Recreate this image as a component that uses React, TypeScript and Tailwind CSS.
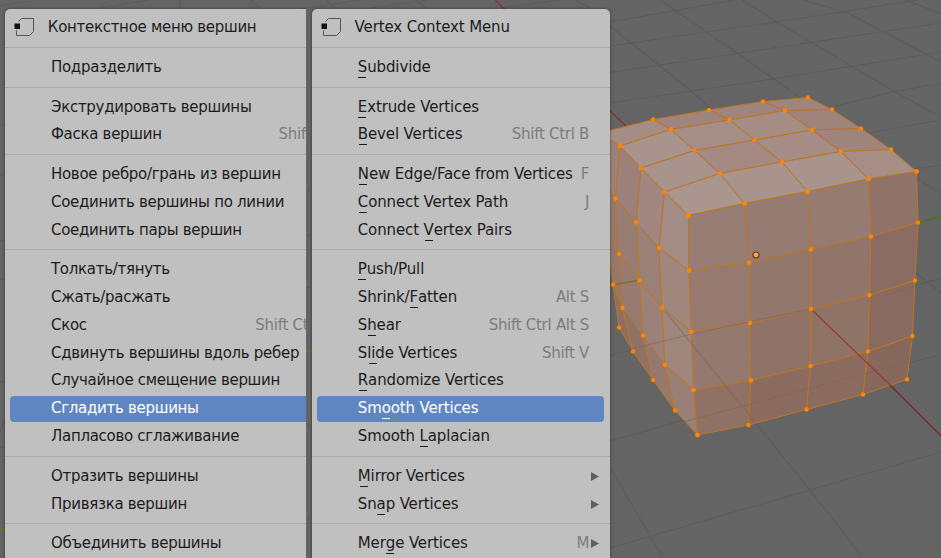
type Item = {
  label: string;
  keys?: string;
  active?: boolean;
  arrow?: boolean;
};

const russian: Item[][] = [
  [{ label: "Подразделить" }],
  [{ label: "Экструдировать вершины" }, { label: "Фаска вершин", keys: "Shift Ctrl B" }],
  [
    { label: "Новое ребро/грань из вершин" },
    { label: "Соединить вершины по линии" },
    { label: "Соединить пары вершин" },
  ],
  [
    { label: "Толкать/тянуть" },
    { label: "Сжать/расжать" },
    { label: "Скос", keys: "Shift Ctrl Alt S" },
    { label: "Сдвинуть вершины вдоль ребер" },
    { label: "Случайное смещение вершин" },
    { label: "Сгладить вершины", active: true },
    { label: "Лапласово сглаживание" },
  ],
  [{ label: "Отразить вершины" }, { label: "Привязка вершин" }],
  [{ label: "Объединить вершины" }],
];

// "&" precedes the accelerator letter of a label
const english: Item[][] = [
  [{ label: "&Subdivide" }],
  [{ label: "&Extrude Vertices" }, { label: "&Bevel Vertices", keys: "Shift Ctrl B" }],
  [
    { label: "&New Edge/Face from Vertices", keys: "F" },
    { label: "&Connect Vertex Path", keys: "J" },
    { label: "Connect &Vertex Pairs" },
  ],
  [
    { label: "&Push/Pull" },
    { label: "Shrink/&Fatten", keys: "Alt S" },
    { label: "S&hear", keys: "Shift Ctrl Alt S" },
    { label: "Sl&ide Vertices", keys: "Shift V" },
    { label: "&Randomize Vertices" },
    { label: "Sm&ooth Vertices", active: true },
    { label: "Smooth &Laplacian" },
  ],
  [
    { label: "&Mirror Vertices", arrow: true },
    { label: "Sn&ap Vertices", arrow: true },
  ],
  [{ label: "Mer&ge Vertices", keys: "M", arrow: true }],
];

function VertexIcon() {
  return (
    <svg className="h-5 w-6 shrink-0" viewBox="0 0 24 20" fill="none">
      <path d="M6.5 3.5L9.5 0.5H21.5V13.5L17.5 17.5H4.5V12.5" stroke="#555" strokeWidth="1" />
      <rect x="2.5" y="5.5" width="5.5" height="5.5" fill="#111" />
    </svg>
  );
}

function Label({ text }: { text: string }) {
  const at = text.indexOf("&");
  if (at < 0) return <span className="pb-px">{text}</span>;
  return (
    <span className="pb-px">
      {text.slice(0, at)}
      <span className="-mx-1 bg-[linear-gradient(currentColor,currentColor)] bg-[length:8px_1px] bg-[position:50%_100%] bg-no-repeat px-1 pb-0.5">
        {text[at + 1]}
      </span>
      {text.slice(at + 2)}
    </span>
  );
}

function Row({ item }: { item: Item }) {
  return (
    <div
      className={
        "flex h-[26.45px] items-center whitespace-nowrap rounded pl-[40.7px] " +
        (item.arrow ? "pr-[5px] " : "pr-[15px] ") +
        (item.active ? "bg-[#5f86c1] text-white" : "text-[#1c1c1c]")
      }
    >
      <Label text={item.label} />
      <span className="ml-auto pb-px tracking-[-0.28px] text-[#7c7c7c]">{item.keys}</span>
      {item.arrow && (
        <svg className="ml-0.5 h-[9px] w-2" viewBox="0 0 8 9">
          <path d="M0 0L8 4.5L0 9Z" fill="#5e5e5e" />
        </svg>
      )}
    </div>
  );
}

function Menu({ title, groups, className }: { title: string; groups: Item[][]; className: string }) {
  return (
    <div className={"h-[600px] shrink-0 rounded-t-[5px] bg-[#c0c0c0] shadow-[0_0_3px_rgba(0,0,0,0.5)] " + className}>
      <div className="flex h-[38.8px] items-center gap-3 whitespace-nowrap pl-[7px] text-[#1c1c1c]">
        <VertexIcon />
        <span className="pb-px">{title}</span>
      </div>
      {groups.map((group, i) => (
        <div
          key={i}
          className="flex flex-col gap-[1.45px] border-t border-[#aaa] px-[5.5px] pb-[5.85px] pt-[6.15px]"
        >
          {group.map((item) => (
            <Row key={item.label} item={item} />
          ))}
        </div>
      ))}
    </div>
  );
}

type P = [number, number];

const top: P[][] = [
  [[600, 133], [653, 119.5], [709, 110], [763, 101.5], [808, 97.5]],
  [[620, 146], [671, 129.5], [729.5, 120], [785, 110.5], [832, 109.5]],
  [[641, 168], [694.5, 150.5], [754.5, 140], [812, 130], [861, 128.5]],
  [[664.5, 192], [720, 173.5], [782, 162], [841, 151.5], [891, 149.5]],
  [[688.5, 215.5], [744.5, 203.5], [807.5, 191.5], [868.5, 179], [916.5, 171.5]],
];
const front: P[][] = [
  top[4],
  [[689, 270.5], [749, 262.5], [811, 249.5], [871, 236.5], [918, 222.5]],
  [[691.5, 332], [750, 323], [811, 309], [869.5, 295], [915, 280.5]],
  [[693.5, 390], [751, 380.5], [810.5, 366], [868, 351.5], [912.5, 336]],
  [[697.5, 435], [748.5, 425], [806.5, 409.5], [863, 394.5], [907, 379.5]],
];
const side: P[][] = [
  [top[0][0], top[1][0], top[2][0], top[3][0], top[4][0]],
  [[603, 180], [615.5, 198.5], [636, 222.5], [659, 248], front[1][0]],
  [[606, 230], [619, 254], [639.5, 280.5], [662, 307.5], front[2][0]],
  [[613, 284.5], [622.5, 308], [643, 335.5], [665, 365], front[3][0]],
  [[619, 327.5], [633, 351.5], [653, 380], [675, 410.5], front[4][0]],
];

const topFill = [
  ["#a58d86", "#a0857e", "#a0857e", "#a0857e"],
  ["#a9938d", "#a68e88", "#a58d86", "#9f847c"],
  ["#a9938d", "#a38982", "#a58d86", "#a0857e"],
  ["#ab968f", "#a9938d", "#a9938d", "#a68e87"],
];
const frontFill = [
  ["#987d74", "#967b72", "#957b71", "#8f7369"],
  ["#967a70", "#92776d", "#91756b", "#8a6c62"],
  ["#94796f", "#8f7368", "#8f7367", "#896a60"],
  ["#907166", "#8b6b60", "#8b6b5f", "#88685d"],
];
const sideFill = [
  ["#9b8179", "#9b8179", "#a1877f", "#a38c84"],
  ["#957a70", "#987d74", "#9b8077", "#a0877e"],
  ["#94776d", "#977b71", "#9b8178", "#a0877e"],
  ["#8d6f64", "#8f7267", "#957970", "#997f75"],
];

function Face({ pts, fill }: { pts: P[][]; fill: string[][] }) {
  return (
    <g strokeLinejoin="round">
      {fill.map((row, r) =>
        row.map((c, k) => (
          <polygon
            key={`${r}-${k}`}
            points={[pts[r][k], pts[r][k + 1], pts[r + 1][k + 1], pts[r + 1][k]].join(" ")}
            fill={c}
            stroke="#bd7622"
            strokeWidth="1"
          />
        )),
      )}
    </g>
  );
}

function Dots({ pts }: { pts: P[][] }) {
  return (
    <>
      {pts.flat().map(([x, y], i) => (
        <circle key={i} cx={x} cy={y} r="2.2" fill="#ff8500" />
      ))}
    </>
  );
}

function Viewport() {
  return (
    <svg className="absolute inset-0 h-full w-full" viewBox="0 0 941 558" fill="none">
      <rect width="941" height="558" fill="#646464" />
      <g stroke="#5c5c5c" strokeWidth="1.2">
        <path d="M0 6L30 1M100 8L150 0M180 0V8M250 0L260 8M300 9L360 0M335 8L326 0M415 0L427 8M370 8L428 0M500 8L560 0M575 0L590 8" />
        <path d="M0 45L5 44M0 85L5 84M0 125L5 124M0 175L5 174M0 241L5 240M0 280L5 279M0 382L5 381M0 432L5 418M0 448L5 447M306 191L311 190M306 236L311 235M306 288L311 287M306 426L311 425M306 519L311 518" />
        <path d="M610 22L735 0M610 46L776 22L918 0M610 72.5L737 53.5L847 37L941 23M610 103L773 79L941 52M833 107L893 92L941 83M868 133L941 120M915 169L941 165" />
        <path d="M610 26L690 90L712 110M660 0L737 53L802 99M742 0L777 22L895 92L941 117M803 0L848 13L941 62M906 0L941 14M915 177L941 194" />
        <path d="M610 355L700 334M610 441L730 407L870 372L941 355M610 548L810 490L941 452M610 356L616 354M915 272L941 293M912 287L941 278M745 410L810 490L863 558M610 467L650 536L663 558" />
      </g>
      <path d="M495 0L630 130" stroke="#8b3038" strokeWidth="1.3" />
      <path d="M918 222.5L941 216.5" stroke="#477326" strokeWidth="1.4" />
      <path d="M306 351H311M0 530L5 529" stroke="#4b851f" strokeWidth="1.3" />
      <Face pts={side} fill={sideFill} />
      <Face pts={top} fill={topFill} />
      <Face pts={front} fill={frontFill} />
      <g stroke="#80655b" strokeWidth="1.2" opacity="0.55">
        <path d="M619 352L692 334L810 309M672 425L751 404L868 373L909 362M665 311L755 422M885 295L914 287" />
      </g>
      <path d="M613 285L640 280" stroke="#81702c" strokeWidth="1.4" />
      <path d="M811 309L890 385" stroke="#953e2d" strokeWidth="1.3" />
      <path d="M890 385L941 436" stroke="#7b2128" strokeWidth="1.3" />
      <Dots pts={side} />
      <Dots pts={top} />
      <Dots pts={front} />
      <circle cx="756" cy="255" r="3" fill="#ffa54a" stroke="#60351f" strokeWidth="1.1" />
    </svg>
  );
}

export default function App() {
  return (
    <div className="relative isolate h-[558px] w-[941px] overflow-hidden bg-[#646464] font-['DejaVu_Sans',sans-serif] text-[15px]">
      <Viewport />
      <div className="relative flex h-full">
        <div className="w-[305.6px] shrink-0 overflow-hidden pl-[4.8px] pt-[8.7px]">
          <Menu title="Контекстное меню вершин" groups={russian} className="w-[371.5px] tracking-[-0.29px]" />
        </div>
        <div className="w-[310px] shrink-0 overflow-hidden pl-[6px] pt-[8.7px]">
          <Menu title="Vertex Context Menu" groups={english} className="w-[298px] tracking-[-0.13px]" />
        </div>
      </div>
    </div>
  );
}
